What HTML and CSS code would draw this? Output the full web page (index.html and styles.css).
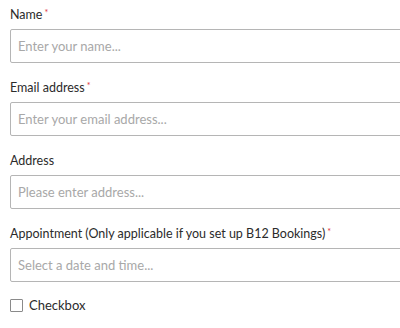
FILE: index.html
```html
<!DOCTYPE html>
<html>
<head>
<meta charset="utf-8">
<link rel="stylesheet" href="styles.css">
</head>
<body>
<form class="form">
  <div class="field">
    <label class="label">Name<span class="req">*</span></label>
    <input class="input" type="text" placeholder="Enter your name...">
  </div>
  <div class="field">
    <label class="label">Email address<span class="req">*</span></label>
    <input class="input" type="text" placeholder="Enter your email address...">
  </div>
  <div class="field">
    <label class="label">Address</label>
    <input class="input" type="text" placeholder="Please enter address...">
  </div>
  <div class="field">
    <label class="label">Appointment (Only applicable if you set up B12 Bookings)<span class="req">*</span></label>
    <input class="input" type="text" placeholder="Select a date and time...">
  </div>
  <label class="check">
    <span class="box"></span>
    <span class="check-text">Checkbox</span>
  </label>
</form>
</body>
</html>
```

FILE: styles.css
```css
html, body {
  margin: 0;
  padding: 0;
  background: #fff;
  overflow: hidden;
}
body {
  font-family: Lato, "Open Sans", sans-serif;
  color: #333;
}
.form {
  display: flex;
  flex-direction: column;
  gap: 17px;
  padding: 7px 0 0 10px;
}
.field {
  display: flex;
  flex-direction: column;
  gap: 6px;
}
.label {
  font-size: 12.5px;
  line-height: 16px;
  color: #2b2b2b;
}
.req {
  color: #e0323a;
  font-size: 9px;
  vertical-align: top;
  margin-left: 2px;
  line-height: 12px;
}
.input {
  box-sizing: border-box;
  width: 420px;
  height: 34px;
  border: 1px solid #b5b5b5;
  border-radius: 2px;
  padding: 0 7px;
  font-family: Lato, sans-serif;
  font-size: 13px;
  color: #333;
  background: #fff;
  outline: none;
}
.input::placeholder {
  color: #a8a8a8;
}
.check {
  display: flex;
  align-items: center;
  gap: 6px;
  font-size: 13px;
  line-height: 16px;
  margin-top: -2px;
  color: #2b2b2b;
}
.box {
  box-sizing: border-box;
  width: 13px;
  height: 13px;
  border: 1px solid #8a8a8a;
  border-radius: 1px;
  background: #fff;
}
```
